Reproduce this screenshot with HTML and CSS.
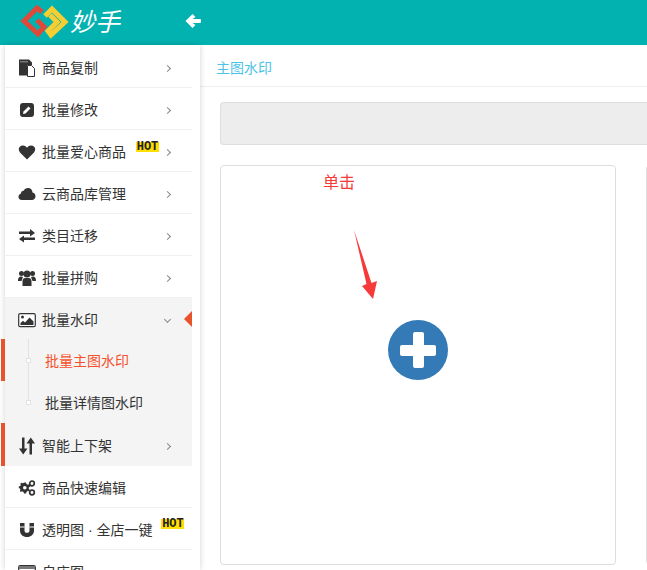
FILE: index.html
```html
<!DOCTYPE html>
<html lang="zh">
<head>
<meta charset="utf-8">
<title>妙手</title>
<link rel="stylesheet" href="styles.css">
</head>
<body>
<header class="topbar">
  <svg class="logo" width="50" height="45" viewBox="20 0 50 45">
    <path d="M42 12 L37 8 L24 21 L38 34 L44 27 L37 20" fill="none" stroke="#e0493a" stroke-width="5"/>
    <path d="M50 15 L57 22 L48 31 L51 35 L65 22 L52 9 L45 16" fill="none" stroke="#f4ce32" stroke-width="5"/>
  </svg>
  <span class="brand">妙手</span>
  <svg class="back" width="16" height="16" viewBox="0 0 16 16"><path d="M0.500 8 L7.500 1 L10.500 4 L7.500 6 H15 Q16 6 16 7 V9 Q16 10 15 10 H7.500 L10.500 12 L7.500 15 Z" fill="#fff"/></svg>
</header>
<div class="layout">
  <nav class="sidebar">
    <a class="item"><svg class="icon" viewBox="0 0 18 18"><path d="M1 0.500 H11 L14 3.500 V6 H9 V16.500 H1 Z" fill="#333"/><path d="M2 2 H10 V3.500 H2 Z" fill="#777"/><path d="M9.500 6.500 H13.500 L16.500 9.500 V17.500 H9.500 Z" fill="#fff" stroke="#333"/></svg><span>商品复制</span><i class="chev"></i></a>
    <a class="item"><svg class="icon" viewBox="0 0 18 18"><rect x="2" y="2" width="14" height="14" rx="3" fill="#333"/><path d="M5 13 L5.500 10.500 L10.500 5.500 L12.500 7.500 L7.500 12.500 Z" fill="#fff"/></svg><span>批量修改</span><i class="chev"></i></a>
    <a class="item"><svg class="icon" viewBox="0 0 18 18"><path d="M9 16.500 L2 9.500 C-0.500 6.500 1 2.500 5 2.500 C7 2.500 8.300 3.500 9 4.800 C9.700 3.500 11 2.500 13 2.500 C17 2.500 18.500 6.500 16 9.500 Z" fill="#333"/></svg><span>批量爱心商品</span><b class="hot">HOT</b><i class="chev"></i></a>
    <a class="item"><svg class="icon" viewBox="0 0 18 18"><path d="M4 15 C1.500 15 0.500 13.200 0.500 11.700 C0.500 10 1.600 8.800 3 8.400 C3 6.700 4.300 5.600 5.700 5.800 C6.500 4 8 3 10 3 C12.700 3 14.500 5 14.500 7.600 C16.400 8 17.500 9.500 17.500 11.300 C17.500 13.500 15.800 15 14 15 Z" fill="#333"/></svg><span>云商品库管理</span><i class="chev"></i></a>
    <a class="item"><svg class="icon" viewBox="0 0 18 18"><path d="M1 4.500 H12 V2 L17 6 L12 9.500 V7 H1 Z M17 10.500 H6 V8.500 L1 12 L6 15.500 V13 H17 Z" fill="#333"/></svg><span>类目迁移</span><i class="chev"></i></a>
    <a class="item"><svg class="icon" viewBox="0 0 18 18"><circle cx="3.500" cy="4.500" r="2.500" fill="#333"/><circle cx="14.500" cy="4.500" r="2.500" fill="#333"/><circle cx="9" cy="5" r="3.500" fill="#333"/><path d="M0 12 C0 8.500 1.500 7.500 3 7.500 L5 8 L3.500 12 Z M18 12 C18 8.500 16.500 7.500 15 7.500 L13 8 L14.500 12 Z M4.500 17 V12 C4.500 10 6 9 7 9 H11 C12 9 13.500 10 13.500 12 V17 Z" fill="#333"/></svg><span>批量拼购</span><i class="chev"></i></a>
    <div class="group">
      <a class="item item-open"><svg class="icon" viewBox="0 0 18 18"><rect x="0.700" y="2.700" width="16.600" height="13" rx="1.500" fill="#fff" stroke="#333" stroke-width="1.200"/><circle cx="4.500" cy="6" r="1.500" fill="#333"/><path d="M2.500 14 V12 L5 9.800 L7 11.500 L11.500 6.500 L15.500 10.500 V14 Z" fill="#333"/></svg><span>批量水印</span><i class="chev chev-down"></i><i class="pointer"></i></a>
      <div class="subs">
        <a class="sub sub-active"><i class="node"></i>批量主图水印</a>
        <a class="sub"><i class="node"></i>批量详情图水印</a>
      </div>
      <a class="item item-flag"><svg class="icon" viewBox="0 0 18 18"><path d="M4 0.500 H6.500 V11.500 H9.500 L5.200 17.500 L1 11.500 H4 Z M11.500 17.500 H14 V6.500 H17 L12.800 0.500 L8.500 6.500 H11.500 Z" fill="#333"/></svg><span>智能上下架</span><i class="chev"></i></a>
    </div>
    <a class="item"><svg class="icon" viewBox="0 0 18 18"><path d="M6.500 3.500 H8 L8.500 5 L10 5.700 L11.200 5 L12.200 6 V7.500 L10.800 8.500 V10 L12 11 L11 12.200 L9.500 12 L8.500 13 L8 14.500 H6 L5.500 13 L4 12.300 L2.800 13 L1.800 12 L2.500 10.500 L1.800 9.500 L0.800 9 V7.500 L2.300 7 L2.800 5.700 L2.300 4.800 L3.300 3.800 L4.800 4.300 L5.800 3.800 Z" fill="#333"/><circle cx="6.800" cy="8.800" r="1.800" fill="#fff"/><circle cx="14" cy="4.500" r="2.300" fill="none" stroke="#333" stroke-width="1.700"/><circle cx="14" cy="13.500" r="2.300" fill="none" stroke="#333" stroke-width="1.700"/></svg><span>商品快速编辑</span></a>
    <a class="item"><svg class="icon" viewBox="0 0 18 18"><path d="M2 2 H6.500 V9.500 C6.500 11 7.500 11.800 9 11.800 C10.500 11.800 11.500 11 11.500 9.500 V2 H16 V9.500 C16 13.500 13 16 9 16 C5 16 2 13.500 2 9.500 Z" fill="#333"/><path d="M6.500 5.500 V6.500 H2 V5.500 Z M16 5.500 V6.500 H11.500 V5.500 Z" fill="#fff"/></svg><span class="nowrap">透明图 · 全店一键</span><b class="hot hot-wide">HOT</b></a>
    <a class="item"><svg class="icon" viewBox="0 0 18 18"><rect x="0.700" y="2.700" width="16.600" height="13" rx="1.500" fill="#fff" stroke="#333" stroke-width="1.200"/><rect x="1" y="3" width="16" height="3" fill="#777"/></svg><span>自店图</span></a>
  </nav>
  <main class="main">
    <div class="crumb">主图水印</div>
    <div class="content">
      <div class="toolbar"></div>
      <div class="cards">
        <section class="card">
          <span class="note">单击</span>
          <svg class="arrow" width="26" height="72" viewBox="0 0 26 72"><path d="M1 1 L18.500 54 L24 52 L20 70 L9 57 L13.500 55 Z" fill="#f63a3a"/></svg>
          <button class="add" type="button" aria-label="添加"><i class="add-h"></i><i class="add-v"></i></button>
        </section>
        <section class="card"></section>
      </div>
    </div>
  </main>
</div>
</body>
</html>
```
FILE: styles.css
```css
* { box-sizing: border-box; }
html, body { margin: 0; height: 570px; overflow: hidden; background: #fff; }
body { font-family: "Liberation Sans", "Noto Sans CJK SC", sans-serif; font-size: 14px; color: #333; }

.topbar { height: 45px; background: #02b2b0; display: flex; align-items: center; padding-left: 20px; }
.logo { flex: none; }
.brand { color: #fff; font-size: 25px; font-style: italic; line-height: 1; width: 52px; }
.back { margin-left: 63px; margin-top: -3px; }

.layout { display: flex; height: 525px; }
.sidebar { width: 195px; margin-left: 5px; padding: 1px 8px 0 0; flex: none; background: #fff; box-shadow: 0 0 6px rgba(0,0,0,.18); position: relative; z-index: 1; }
.item { height: 42px; display: flex; align-items: center; border-bottom: 1px solid #f0f0f0; padding: 2px 0 0 13px; position: relative; color: #333; line-height: 20px; }
.icon { width: 18px; height: 18px; flex: none; margin-right: 6px; }
.nowrap { white-space: nowrap; }
.chev { width: 5px; height: 5px; border-top: 1px solid #888; border-right: 1px solid #888; transform: rotate(45deg); margin-left: auto; margin-right: 22px; margin-top: 2px; flex: none; }
.chev-down { transform: rotate(135deg); margin-top: -2px; }
.hot { font: bold 12px/10px "Liberation Mono", monospace; background: #ffdf00; color: #222; align-self: flex-start; margin-top: 10px; margin-left: 10px; width: 23px; height: 10px; flex: none; text-align: center; }
.hot-wide { margin-left: 9px; margin-top: 9px; }

.group { background: #f4f4f4; margin-top: -1px; }
.group .item { border-bottom: 0; }
.item-open { padding-top: 4px; }
.pointer { position: absolute; right: 0; top: 14px; width: 0; height: 0; border: 8px solid transparent; border-left-width: 0; border-right-color: #e8532d; }
.subs { position: relative; }
.subs::before { content: ""; position: absolute; left: 23px; top: 0; height: 66px; width: 1px; background: #e2e2e2; }
.sub { height: 42px; display: flex; align-items: center; padding-left: 40px; position: relative; color: #333; }
.node { position: absolute; left: 21px; top: 19px; width: 5px; height: 5px; background: #fff; border: 1px solid #e2e2e2; }
.sub-active { color: #f4512c; }
.sub-active::before, .item-flag::before { content: ""; position: absolute; left: -4px; top: 0; bottom: 0; width: 4px; background: #e8532d; }
.item-flag { height: 43px; }

.main { flex: 1; min-width: 0; }
.crumb { height: 42px; border-bottom: 1px solid #eee; padding: 2px 0 0 16px; display: flex; align-items: center; color: #4cc3e6; }
.content { padding: 15px 0 0 20px; }
.toolbar { height: 43px; background: #ededed; border: 1px solid #ddd; border-right: 0; border-radius: 4px 0 0 4px; margin-bottom: 20px; }
.cards { display: flex; gap: 30px; }
.card { flex: none; width: 396px; height: 400px; border: 1px solid #ddd; border-radius: 4px; position: relative; display: flex; align-items: center; justify-content: center; padding-bottom: 30px; }
.note { position: absolute; left: 102px; top: 6px; color: #f63a3a; font-size: 16px; line-height: 22px; }
.arrow { position: absolute; left: 132px; top: 63px; }
.add { width: 60px; height: 60px; border-radius: 50%; background: #337ab7; border: 0; padding: 0; position: relative; }
.add-h { position: absolute; left: 12px; top: 25px; width: 36px; height: 11px; background: #fff; border-radius: 2px; }
.add-v { position: absolute; left: 25px; top: 12px; width: 11px; height: 36px; background: #fff; border-radius: 2px; }
```
